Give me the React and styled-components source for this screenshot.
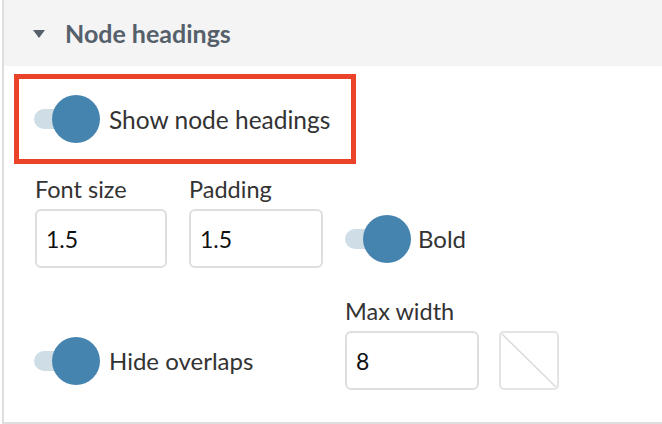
import React from "react";
import styled, { createGlobalStyle } from "styled-components";

const Global = createGlobalStyle`
  html, body { margin: 0; padding: 0; background: #fff; }
  body { font-family: Lato, "Noto Sans", sans-serif; color: #333; }
`;

const Page = styled.div`
  padding-left: 2px;
  width: 662px;
  height: 424px;
  box-sizing: border-box;
  overflow: hidden;
`;

const Panel = styled.section`
  border-left: 2px solid #dedede;
  border-bottom: 2px solid #dedede;
  width: 680px;
  height: 424px;
  box-sizing: border-box;
`;

const Header = styled.div`
  height: 66px;
  background: #f4f4f4;
  display: flex;
  align-items: center;
  padding-left: 29px;
  gap: 20px;
`;

const Caret = styled.span`
  width: 0;
  height: 0;
  border-left: 6px solid transparent;
  border-right: 6px solid transparent;
  border-top: 8px solid #55606b;
  margin-top: 1px;
`;

const Title = styled.h3`
  margin: 0;
  font-size: 25px;
  font-weight: 700;
  color: #55606b;
`;

const Body = styled.div`
  padding: 8px 0 0 10px;
`;

const Highlight = styled.div`
  width: 342px;
  height: 90px;
  box-sizing: border-box;
  border: 5px solid #ea4329;
  display: flex;
  align-items: center;
  padding-left: 15px;
`;

const Grid = styled.div`
  display: grid;
  grid-template-columns: 132px 134px auto;
  column-gap: 22px;
  row-gap: 30px;
  margin: 12px 0 0 21px;
  align-items: end;
`;

const Field = styled.div`
  display: flex;
  flex-direction: column;
  gap: 6px;
`;

const Label = styled.label`
  font-size: 23.5px;
  line-height: 27px;
  color: #333;
`;

const Input = styled.input`
  box-sizing: border-box;
  width: ${(p) => p.$w || 134}px;
  height: 59px;
  border: 2px solid #dedede;
  border-radius: 6px;
  padding: 0 0 0 9px;
  font-family: Lato, "Noto Sans", sans-serif;
  font-size: 23px;
  color: #111;
  outline: none;
  background: #fff;
`;

const ToggleCell = styled.div`
  display: flex;
  align-items: center;
  height: 59px;
  grid-column: ${(p) => p.$span || "auto"};
  margin-left: ${(p) => p.$shift || 0}px;
`;

const ToggleRow = styled.div`
  display: flex;
  align-items: center;
  gap: ${(p) => p.$gap || 9}px;
`;

const Switch = styled.span`
  position: relative;
  display: inline-block;
  width: 66px;
  height: 48px;
  flex-shrink: 0;
`;

const Track = styled.span`
  position: absolute;
  left: 0;
  top: 14px;
  width: 56px;
  height: 20px;
  border-radius: 10px;
  background: #cfdee6;
`;

const Knob = styled.span`
  position: absolute;
  left: 18px;
  top: 0;
  width: 48px;
  height: 48px;
  border-radius: 50%;
  background: #4684b0;
`;

const ToggleText = styled.span`
  font-size: ${(p) => p.$size || 24}px;
  color: #333;
  white-space: nowrap;
`;

const InlineGroup = styled.div`
  display: flex;
  align-items: flex-end;
  gap: 20px;
`;

const Swatch = styled.div`
  width: 60px;
  height: 59px;
  box-sizing: border-box;
  border: 2px solid #e4e4e4;
  border-radius: 5px;
  overflow: hidden;
  svg { display: block; }
`;

function Toggle({ label, size, gap }) {
  return (
    <ToggleRow $gap={gap}>
      <Switch>
        <Track />
        <Knob />
      </Switch>
      <ToggleText $size={size}>{label}</ToggleText>
    </ToggleRow>
  );
}

export default function App() {
  return (
    <>
      <Global />
      <Page>
        <Panel>
          <Header>
            <Caret />
            <Title>Node headings</Title>
          </Header>
          <Body>
            <Highlight>
              <Toggle label="Show node headings" size={24.5} />
            </Highlight>
            <Grid>
              <Field>
                <Label>Font size</Label>
                <Input defaultValue="1.5" $w={132} />
              </Field>
              <Field>
                <Label>Padding</Label>
                <Input defaultValue="1.5" />
              </Field>
              <ToggleCell>
                <Toggle label="Bold" size={24} gap={7} />
              </ToggleCell>
              <ToggleCell $span="1 / span 2" $shift={-1}>
                <Toggle label="Hide overlaps" size={24} />
              </ToggleCell>
              <InlineGroup>
                <Field>
                  <Label>Max width</Label>
                  <Input defaultValue="8" />
                </Field>
                <Swatch>
                  <svg width="56" height="55" viewBox="0 0 56 55">
                    <line x1="0" y1="0" x2="56" y2="55" stroke="#dcdcdc" strokeWidth="1.5" />
                  </svg>
                </Swatch>
              </InlineGroup>
            </Grid>
          </Body>
        </Panel>
      </Page>
    </>
  );
}
